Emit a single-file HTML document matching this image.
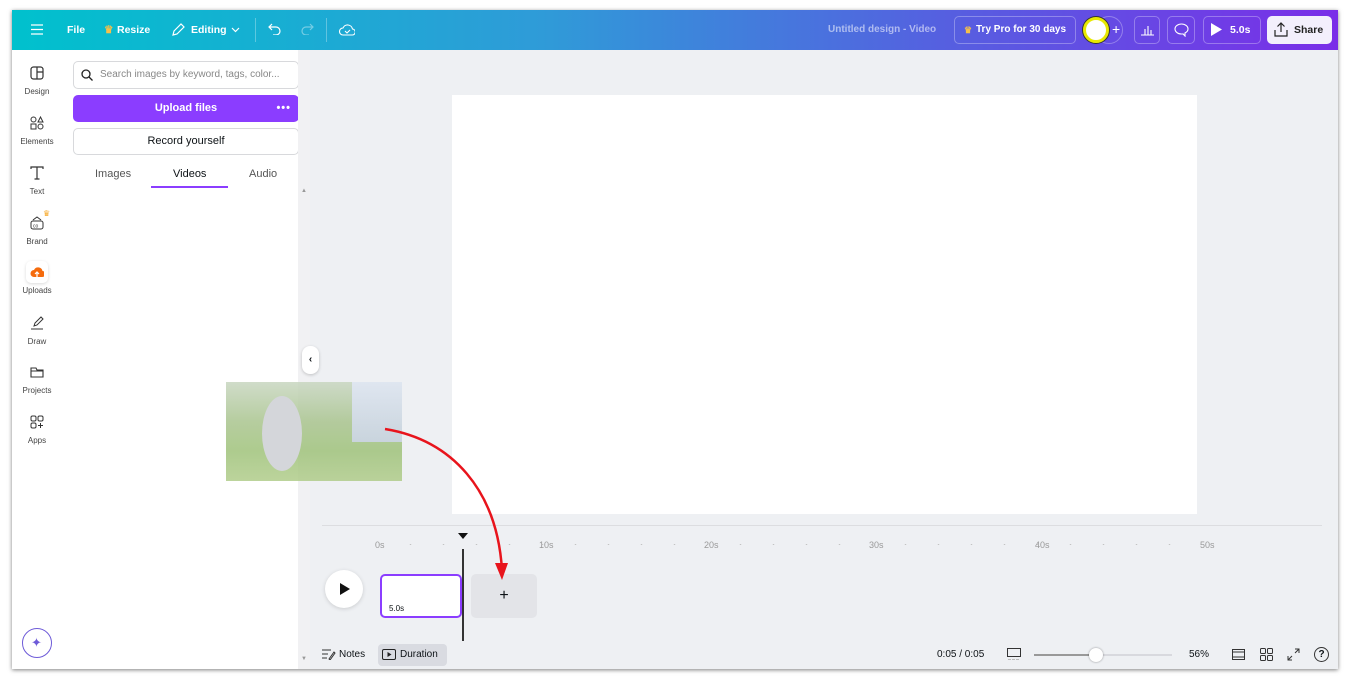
<!DOCTYPE html>
<html><head><meta charset="utf-8"><style>
*{box-sizing:border-box;margin:0;padding:0}
body{width:1349px;height:680px;background:#fff;font-family:"Liberation Sans",sans-serif;position:relative;overflow:hidden;color:#0d1216}
.win{position:absolute;left:12px;top:10px;width:1326px;height:659px;background:#eef0f3;box-shadow:0 1px 4px rgba(0,0,0,.5);overflow:hidden}
.hdr{position:absolute;left:0;top:0;width:1326px;height:40px;background:linear-gradient(90deg,#00c1cd 0%,#2f9bd8 40%,#5560e0 70%,#7a2ee8 100%);color:#fff;font-size:10.5px;font-weight:bold}
.hdr span{position:absolute;top:14px}
.ab{position:absolute;top:6px;height:28px;border:1px solid rgba(255,255,255,.3);border-radius:5px}
.rail{position:absolute;left:0;top:40px;width:50px;height:619px;background:#fff}
.ri{position:absolute;left:0;width:50px;text-align:center;font-size:8px;color:#444}
.ri svg{display:block;margin:0 auto 7px}
.panel{position:absolute;left:50px;top:40px;width:236px;height:619px;background:#fff}
.sb{position:absolute;left:286px;top:40px;width:12px;height:619px;background:#f1f1f3}
.t{position:absolute;font-size:9px;color:#999}
</style></head><body>
<div class="win">
<div class="hdr">
 <svg style="position:absolute;left:19px;top:14px" width="12" height="11"><path d="M0 1h12M0 5.5h12M0 10h12" stroke="#fff" stroke-width="1.3"/></svg>
 <span style="left:55px">File</span>
 <span style="left:92px;color:#f6c04a">♛</span><span style="left:105px">Resize</span>
 <svg style="position:absolute;left:159px;top:13px" width="14" height="14"><path d="M2 12l1-4 7-7 3 3-7 7z" fill="none" stroke="#fff" stroke-width="1.2"/></svg>
 <span style="left:179px">Editing</span>
 <svg style="position:absolute;left:219px;top:17px" width="9" height="6"><path d="M1 1l3.5 3.5L8 1" fill="none" stroke="#fff" stroke-width="1.2"/></svg>
 <div style="position:absolute;left:243px;top:8px;width:1px;height:24px;background:rgba(255,255,255,.3)"></div>
 <svg style="position:absolute;left:256px;top:13px" width="14" height="12"><path d="M4 1L1 4l3 3M1 4h7a4 4 0 010 8H5" fill="none" stroke="#fff" stroke-width="1.2"/></svg>
 <svg style="position:absolute;left:288px;top:13px" width="14" height="12"><path d="M10 1l3 3-3 3M13 4H6a4 4 0 000 8h3" fill="none" stroke="rgba(255,255,255,.4)" stroke-width="1.2"/></svg>
 <div style="position:absolute;left:314px;top:8px;width:1px;height:24px;background:rgba(255,255,255,.3)"></div>
 <svg style="position:absolute;left:327px;top:13px" width="16" height="13"><path d="M4 12a3.5 3.5 0 010-7 5 5 0 019.5 1 3 3 0 01-.5 6z" fill="none" stroke="#fff" stroke-width="1.1"/><path d="M6 8l2 2 3-3" fill="none" stroke="#fff" stroke-width="1.1"/></svg>
 <span style="left:816px;color:rgba(255,255,255,.55);font-size:10px">Untitled design - Video</span>
 <div class="ab" style="left:942px;width:122px"></div>
 <span style="left:952px;color:#f6c04a;font-size:9px;top:15px">♛</span><span style="left:964px;font-size:10px">Try Pro for 30 days</span>
 <div class="ab" style="left:1083px;width:28px;border-radius:14px"></div>
 <div style="position:absolute;left:1071px;top:7px;width:26px;height:26px;border-radius:50%;background:#fff;border:3px solid #e8e800;box-shadow:0 0 0 1px #333"></div>
 <span style="left:1100px;font-size:14px;top:11px;font-weight:normal">+</span>
 <div class="ab" style="left:1122px;width:26px"></div>
 <svg style="position:absolute;left:1129px;top:13px" width="13" height="13"><path d="M0 12h13M4 12V6M7 12V3M10 12V7" stroke="#fff" stroke-width="1.1"/></svg>
 <div class="ab" style="left:1155px;width:28px"></div>
 <svg style="position:absolute;left:1162px;top:13px" width="15" height="14"><path d="M7.5 1C3.9 1 1 3.3 1 6s2.9 5 6.5 5c.5 0 1 0 1.5-.1L11 13v-3c2-1 3-2.3 3-4 0-2.7-2.9-5-6.5-5z" fill="none" stroke="#fff" stroke-width="1.1"/></svg>
 <div class="ab" style="left:1191px;width:58px"></div>
 <svg style="position:absolute;left:1199px;top:13px" width="11" height="13"><path d="M0 0l11 6.5L0 13z" fill="#fff"/></svg>
 <span style="left:1218px">5.0s</span>
 <div style="position:absolute;left:1255px;top:6px;width:65px;height:28px;background:#f3effc;border-radius:5px"></div>
 <svg style="position:absolute;left:1262px;top:12px" width="14" height="15"><path d="M7 10V1M3.5 4.5L7 1l3.5 3.5M1 8v6h12V8" fill="none" stroke="#222" stroke-width="1.2"/></svg>
 <span style="left:1282px;color:#222">Share</span>
</div>
<div class="rail">
 <div class="ri" style="top:16px"><svg width="14" height="14"><rect x="1" y="1" width="12" height="12" rx="2.5" fill="none" stroke="#333" stroke-width="1.2"/><path d="M7 1v12M7 6h6" stroke="#333" stroke-width="1.2"/></svg>Design</div>
 <div class="ri" style="top:66px"><svg width="14" height="14"><circle cx="3.5" cy="3.5" r="2.5" fill="none" stroke="#333"/><path d="M10.5 1l2.5 5h-5z" fill="none" stroke="#333"/><rect x="1" y="8" width="5" height="5" fill="none" stroke="#333"/><circle cx="10.5" cy="10.5" r="2.5" fill="none" stroke="#333"/></svg>Elements</div>
 <div class="ri" style="top:116px"><svg width="14" height="14"><path d="M1 3V1h12v2M7 1v12M4.5 13h5" fill="none" stroke="#333" stroke-width="1.2"/></svg>Text</div>
 <div class="ri" style="top:166px"><svg width="14" height="14"><rect x="1" y="5" width="12" height="8" rx="2" fill="none" stroke="#333"/><path d="M3 4l4-3 4 3" fill="none" stroke="#333"/><text x="3" y="11.5" font-size="5" fill="#333">co</text></svg>Brand</div>
 <div style="position:absolute;left:31px;top:159px;color:#f6a623;font-size:8px">♛</div>
 <div style="position:absolute;left:14px;top:211px;width:22px;height:22px;background:#fff;border-radius:5px;box-shadow:0 1px 3px rgba(0,0,0,.15)"></div>
 <div class="ri" style="top:215px"><svg width="14" height="14"><path d="M4 12a3.5 3.5 0 010-7 4.5 4.5 0 018.5 1 3 3 0 01-.5 6z" fill="#f56b0d"/><path d="M7 12V7M5 9l2-2 2 2" stroke="#fff" stroke-width="1.2" fill="none"/></svg>Uploads</div>
 <div class="ri" style="top:266px"><svg width="14" height="14"><path d="M4 10l1-3 6-6 2 2-6 6zM1 13h12" fill="none" stroke="#333"/></svg>Draw</div>
 <div class="ri" style="top:315px"><svg width="14" height="14"><path d="M1 3h5l1 2h6v7H1z" fill="none" stroke="#333" stroke-width="1.1"/><path d="M1 6h12" stroke="#333"/></svg>Projects</div>
 <div class="ri" style="top:365px"><svg width="14" height="14"><rect x="1" y="1" width="5" height="5" rx="1.5" fill="none" stroke="#333"/><rect x="8" y="1" width="5" height="5" rx="1.5" fill="none" stroke="#333"/><rect x="1" y="8" width="5" height="5" rx="1.5" fill="none" stroke="#333"/><path d="M10.5 8v5M8 10.5h5" stroke="#333"/></svg>Apps</div>
 <div style="position:absolute;left:10px;top:578px;width:30px;height:30px;border-radius:50%;border:1.5px solid #6e5bd8;background:#fff"></div>
 <div style="position:absolute;left:19px;top:585px;color:#6e5bd8;font-size:13px">✦</div>
</div>
<div class="panel">
 <div style="position:absolute;left:11px;top:11px;width:226px;height:28px;border:1px solid #d8d9dc;border-radius:5px"></div>
 <svg style="position:absolute;left:19px;top:19px" width="12" height="12"><circle cx="5" cy="5" r="4" fill="none" stroke="#222" stroke-width="1.3"/><path d="M8 8l3.5 3.5" stroke="#222" stroke-width="1.3"/></svg>
 <div style="position:absolute;left:38px;top:19px;font-size:10px;color:#888">Search images by keyword, tags, color...</div>
 <div style="position:absolute;left:11px;top:45px;width:226px;height:27px;background:#8b3dff;border-radius:5px;color:#fff;font-size:11px;font-weight:bold;text-align:center;line-height:27px">Upload files<span style="position:absolute;right:8px;top:0;letter-spacing:1px">•••</span></div>
 <div style="position:absolute;left:11px;top:78px;width:226px;height:27px;border:1px solid #d8d9dc;border-radius:5px;font-size:11px;text-align:center;line-height:25px">Record yourself</div>
 <div style="position:absolute;left:33px;top:118px;font-size:11px;color:#555">Images</div>
 <div style="position:absolute;left:111px;top:118px;font-size:11px">Videos</div>
 <div style="position:absolute;left:187px;top:118px;font-size:11px;color:#555">Audio</div>
 <div style="position:absolute;left:89px;top:136px;width:77px;height:2px;background:#8b3dff"></div>
</div>
<div class="sb"><div class="t" style="left:3px;top:138px;font-size:6px">▲</div><div class="t" style="left:3px;top:606px;font-size:6px">▼</div></div>
<div style="position:absolute;left:290px;top:336px;width:17px;height:28px;background:#fff;border-radius:8px;box-shadow:0 1px 3px rgba(0,0,0,.2);font-size:10px;text-align:center;line-height:28px;font-weight:bold">‹</div>
<div style="position:absolute;left:440px;top:85px;width:745px;height:419px;background:#fff"></div>
<div style="position:absolute;left:310px;top:515px;width:1000px;height:1px;background:#dcdde0"></div>
<div class="t" style="left:363px;top:530px">0s</div><div class="t" style="left:527px;top:530px">10s</div><div class="t" style="left:692px;top:530px">20s</div><div class="t" style="left:857px;top:530px">30s</div><div class="t" style="left:1023px;top:530px">40s</div><div class="t" style="left:1188px;top:530px">50s</div>
<div style="position:absolute;left:382px;top:534px;width:800px;height:1px;background-image:radial-gradient(circle,#bbb 0.7px,transparent 1px);background-size:33px 2px;background-position:0 0"></div>
<div style="position:absolute;left:313px;top:560px;width:38px;height:38px;border-radius:50%;background:#fff;box-shadow:0 1px 4px rgba(0,0,0,.15)"></div>
<svg style="position:absolute;left:328px;top:573px" width="10" height="12"><path d="M0 0l10 6-10 6z" fill="#111"/></svg>
<div style="position:absolute;left:368px;top:564px;width:82px;height:44px;border:2px solid #8b3dff;border-radius:5px;background:#fff"></div>
<div style="position:absolute;left:377px;top:594px;font-size:8px">5.0s</div>
<div style="position:absolute;left:459px;top:564px;width:66px;height:44px;background:#e3e4e8;border-radius:5px;text-align:center;line-height:44px;font-size:16px">+</div>
<div style="position:absolute;left:450px;top:539px;width:2px;height:92px;background:#333"></div>
<svg style="position:absolute;left:446px;top:522px" width="10" height="8"><path d="M0 1h10L5 7z" fill="#111"/></svg>
<div style="position:absolute;left:214px;top:372px;width:176px;height:99px;background:linear-gradient(180deg,#c8d6c0 0%,#a9c48e 40%,#9fc27a 70%,#b0cc8a 100%);opacity:.85"></div>
<div style="position:absolute;left:340px;top:372px;width:50px;height:60px;background:linear-gradient(#dfe6f0,#c9d4dd)"></div>
<div style="position:absolute;left:250px;top:386px;width:40px;height:75px;border-radius:50%;background:#d4d6da"></div>
<svg style="position:absolute;left:0;top:0" width="1326" height="659"><path d="M373 419C440 430 485 480 490 560" fill="none" stroke="#e8141c" stroke-width="2.5"/><path d="M483 553l7 17 6-17z" fill="#e8141c"/></svg>
<svg style="position:absolute;left:310px;top:639px" width="14" height="11"><path d="M0 1h9M0 5h6M0 9h5M7 10l5-7 1 1-5 7z" stroke="#333" fill="none"/></svg>
<div style="position:absolute;left:327px;top:639px;font-size:10px">Notes</div>
<div style="position:absolute;left:366px;top:634px;width:69px;height:22px;background:#d9dbe1;border-radius:4px"></div>
<svg style="position:absolute;left:370px;top:639px" width="14" height="11"><rect x=".5" y=".5" width="13" height="10" rx="1.5" fill="none" stroke="#222"/><path d="M5.5 3v5l4-2.5z" fill="#222"/></svg>
<div style="position:absolute;left:388px;top:639px;font-size:10px">Duration</div>
<div style="position:absolute;left:925px;top:639px;font-size:10px">0:05 / 0:05</div>
<svg style="position:absolute;left:995px;top:638px" width="14" height="13"><rect x=".5" y=".5" width="13" height="8" fill="none" stroke="#333"/><path d="M1 11.5h12" stroke="#bbb" stroke-dasharray="3 1"/></svg>
<div style="position:absolute;left:1022px;top:644px;width:138px;height:2px;background:#d8d9de"></div>
<div style="position:absolute;left:1022px;top:644px;width:62px;height:2px;background:#999"></div>
<div style="position:absolute;left:1077px;top:638px;width:14px;height:14px;border-radius:50%;background:#fff;box-shadow:0 0 2px rgba(0,0,0,.4)"></div>
<div style="position:absolute;left:1177px;top:639px;font-size:10px">56%</div>
<svg style="position:absolute;left:1220px;top:638px" width="13" height="13"><rect x=".5" y="1.5" width="12" height="10" fill="none" stroke="#333"/><path d="M1 4h11M1 9h11" stroke="#333"/></svg>
<svg style="position:absolute;left:1248px;top:638px" width="13" height="13"><rect x=".5" y=".5" width="5" height="5" rx="1" fill="none" stroke="#333"/><rect x="7.5" y=".5" width="5" height="5" rx="1" fill="none" stroke="#333"/><rect x=".5" y="7.5" width="5" height="5" rx="1" fill="none" stroke="#333"/><rect x="7.5" y="7.5" width="5" height="5" rx="1" fill="none" stroke="#333"/></svg>
<svg style="position:absolute;left:1275px;top:638px" width="13" height="13"><path d="M1 12l4-4M1 8v4h4M12 1L8 5M8 1h4v4" fill="none" stroke="#333"/></svg>
<div style="position:absolute;left:1302px;top:637px;width:15px;height:15px;border-radius:50%;border:1.3px solid #333;font-size:10px;text-align:center;line-height:13px;font-weight:bold">?</div>
</div>
</body></html>
